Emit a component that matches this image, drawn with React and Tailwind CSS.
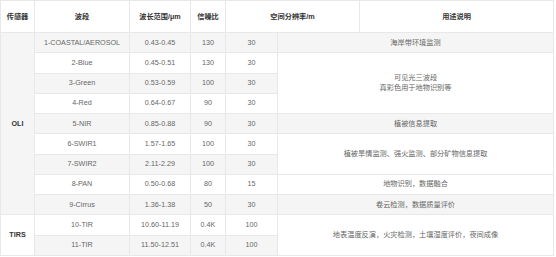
import React from 'react'

const rows = [
  { band: '1-COASTAL/AEROSOL', wl: '0.43-0.45', snr: '130', res: '30', use: ['海岸带环境监测'], span: 1 },
  { band: '2-Blue', wl: '0.45-0.51', snr: '130', res: '30', use: ['可见光三波段', '真彩色用于地物识别等'], span: 3 },
  { band: '3-Green', wl: '0.53-0.59', snr: '100', res: '30' },
  { band: '4-Red', wl: '0.64-0.67', snr: '90', res: '30' },
  { band: '5-NIR', wl: '0.85-0.88', snr: '90', res: '30', use: ['植被信息提取'], span: 1 },
  { band: '6-SWIR1', wl: '1.57-1.65', snr: '100', res: '30', use: ['植被旱情监测、强火监测、部分矿物信息提取'], span: 2 },
  { band: '7-SWIR2', wl: '2.11-2.29', snr: '100', res: '30' },
  { band: '8-PAN', wl: '0.50-0.68', snr: '80', res: '15', use: ['地物识别，数据融合'], span: 1 },
  { band: '9-Cirrus', wl: '1.36-1.38', snr: '50', res: '30', use: ['卷云检测，数据质量评价'], span: 1 },
  { band: '10-TIR', wl: '10.60-11.19', snr: '0.4K', res: '100', use: ['地表温度反演，火灾检测，土壤湿度评价，夜间成像'], span: 2 },
  { band: '11-TIR', wl: '11.50-12.51', snr: '0.4K', res: '100' },
]

const cell = 'border border-[#e8e8e8] text-center p-0'

export default function App() {
  return (
    <div className="w-[556px] h-[257px] bg-white" style={{ fontFamily: '"Liberation Sans", "Noto Sans CJK SC", sans-serif' }}>
      <table className="table-fixed border-collapse w-[553px] text-[7.2px] leading-[10px] text-[#666]">
        <colgroup>
          <col className="w-[34px]" />
          <col className="w-[95px]" />
          <col className="w-[61px]" />
          <col className="w-[35px]" />
          <col className="w-[52px]" />
          <col className="w-[82px]" />
          <col className="w-[194px]" />
        </colgroup>
        <thead>
          <tr className="h-[32px] bg-white text-[#333] font-bold">
            <th className={cell}>传感器</th>
            <th className={cell}>波段</th>
            <th className={cell}>波长范围/μm</th>
            <th className={cell}>信噪比</th>
            <th className={cell} colSpan={2}>空间分辨率/m</th>
            <th className={cell}>用途说明</th>
          </tr>
        </thead>
        <tbody>
          {rows.map((r, i) => (
            <tr key={i} className={`h-[20.27px] ${i % 2 === 0 ? 'bg-[#f5f5f5]' : 'bg-white'}`}>
              {i === 0 && <td className={`${cell} font-bold text-[#333]`} rowSpan={9}>OLI</td>}
              {i === 9 && <td className={`${cell} font-bold text-[#333]`} rowSpan={2}>TIRS</td>}
              <td className={cell}>{r.band}</td>
              <td className={cell}>{r.wl}</td>
              <td className={cell}>{r.snr}</td>
              <td className={cell}>{r.res}</td>
              {r.use && (
                <td className={cell} colSpan={2} rowSpan={r.span}>
                  {r.use.map((u, j) => <div key={j}>{u}</div>)}
                </td>
              )}
            </tr>
          ))}
        </tbody>
      </table>
    </div>
  )
}
